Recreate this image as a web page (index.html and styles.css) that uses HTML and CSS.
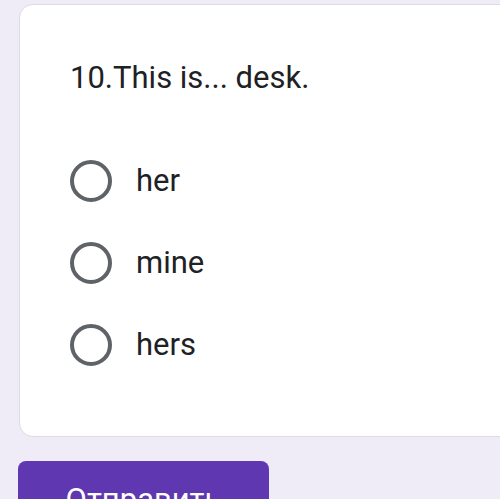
FILE: index.html
```html
<!DOCTYPE html>
<html>
<head>
<meta charset="utf-8">
<link rel="stylesheet" href="styles.css">
</head>
<body>
<div class="page">
  <div class="card">
    <div class="title">10.This is... desk.</div>
    <div class="options">
      <label class="option"><span class="radio"></span><span class="label">her</span></label>
      <label class="option"><span class="radio"></span><span class="label">mine</span></label>
      <label class="option"><span class="radio"></span><span class="label">hers</span></label>
    </div>
  </div>
  <button class="submit">Отправить</button>
</div>
</body>
</html>
```

FILE: styles.css
```css
html, body {
  margin: 0;
  padding: 0;
  width: 500px;
  height: 499px;
  overflow: hidden;
  background: #efebf7;
  font-family: Roboto, "Noto Sans", sans-serif;
  color: #202124;
}
.page {
  padding: 4px 0 0 19px;
}
.card {
  box-sizing: border-box;
  width: 520px;
  height: 433px;
  background: #fff;
  border: 1px solid #dedbe3;
  border-radius: 14px;
  padding: 53px 0 0 50px;
}
.title {
  font-size: 31px;
  line-height: 40px;
}
.options {
  display: flex;
  flex-direction: column;
  gap: 40px;
  margin-top: 62px;
}
.option {
  display: flex;
  align-items: center;
  gap: 24px;
  height: 42px;
}
.radio {
  box-sizing: border-box;
  width: 42px;
  height: 42px;
  border: 4px solid #5f6368;
  border-radius: 50%;
  flex: none;
}
.label {
  font-size: 31px;
  line-height: 40px;
}
.submit {
  display: block;
  margin: 24px 0 0 -1px;
  width: 251px;
  height: 60px;
  border: none;
  border-radius: 8px;
  background: #5f38b1;
  color: #fff;
  font-family: Roboto, "Noto Sans", sans-serif;
  font-size: 31px;
  padding: 18px 0 0;
  text-align: center;
  line-height: 40px;
}
```
